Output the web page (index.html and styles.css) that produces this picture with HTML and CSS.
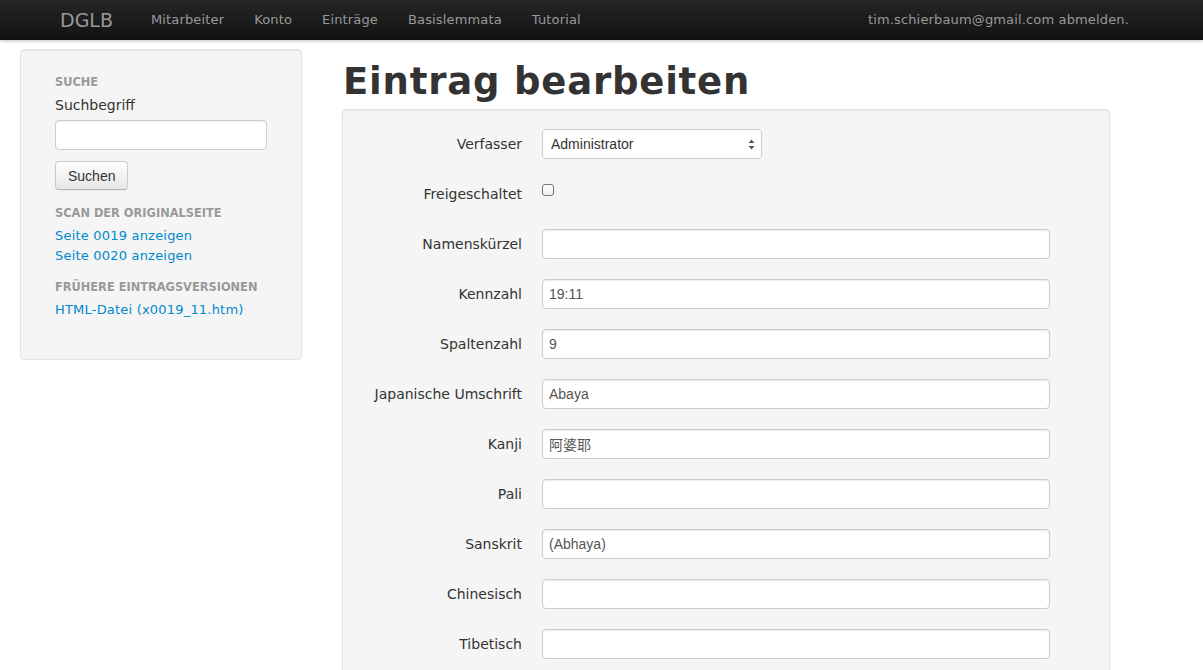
FILE: index.html
```html
<!DOCTYPE html>
<html lang="de">
<head>
<meta charset="utf-8">
<title>DGLB – Eintrag bearbeiten</title>
<link rel="stylesheet" href="styles.css">
</head>
<body>
<header class="navbar">
  <div class="navbar-inner">
    <a class="brand" href="#">DGLB</a>
    <nav class="nav">
      <a href="#">Mitarbeiter</a>
      <a href="#">Konto</a>
      <a href="#">Einträge</a>
      <a href="#">Basislemmata</a>
      <a href="#">Tutorial</a>
    </nav>
    <div class="navbar-text">tim.schierbaum@gmail.com <a href="#">abmelden.</a></div>
  </div>
</header>
<div class="container">
  <aside class="sidebar">
    <div class="well nav-list">
      <div class="nav-header">Suche</div>
      <form class="search">
        <label class="search-label">Suchbegriff</label>
        <input type="text" class="search-input">
        <button type="button" class="btn">Suchen</button>
      </form>
      <div class="nav-header">Scan der Originalseite</div>
      <a class="link" href="#">Seite 0019 anzeigen</a>
      <a class="link" href="#">Seite 0020 anzeigen</a>
      <div class="nav-header">Frühere Eintragsversionen</div>
      <a class="link" href="#">HTML-Datei (x0019_11.htm)</a>
    </div>
  </aside>
  <main class="content">
    <h1>Eintrag bearbeiten</h1>
    <form class="well form-horizontal">
      <div class="control-group">
        <label class="control-label">Verfasser</label>
        <div class="controls">
          <div class="select-wrap">
            <select class="select"><option>Administrator</option></select>
            <svg class="select-arrows" width="7" height="11" viewBox="0 0 7 11"><path d="M3.5 0.5 L6.5 4 H0.5 Z M3.5 10.5 L6.5 7 H0.5 Z" fill="#555"/></svg>
          </div>
        </div>
      </div>
      <div class="control-group">
        <label class="control-label">Freigeschaltet</label>
        <div class="controls check-controls"><span class="checkbox"></span></div>
      </div>
      <div class="control-group">
        <label class="control-label">Namenskürzel</label>
        <div class="controls"><input class="text-input" type="text" value=""></div>
      </div>
      <div class="control-group">
        <label class="control-label">Kennzahl</label>
        <div class="controls"><input class="text-input" type="text" value="19:11"></div>
      </div>
      <div class="control-group">
        <label class="control-label">Spaltenzahl</label>
        <div class="controls"><input class="text-input" type="text" value="9"></div>
      </div>
      <div class="control-group">
        <label class="control-label">Japanische Umschrift</label>
        <div class="controls"><input class="text-input" type="text" value="Abaya"></div>
      </div>
      <div class="control-group">
        <label class="control-label">Kanji</label>
        <div class="controls"><input class="text-input" type="text" value="阿婆耶"></div>
      </div>
      <div class="control-group">
        <label class="control-label">Pali</label>
        <div class="controls"><input class="text-input" type="text" value=""></div>
      </div>
      <div class="control-group">
        <label class="control-label">Sanskrit</label>
        <div class="controls"><input class="text-input" type="text" value="(Abhaya)"></div>
      </div>
      <div class="control-group">
        <label class="control-label">Chinesisch</label>
        <div class="controls"><input class="text-input" type="text" value=""></div>
      </div>
      <div class="control-group">
        <label class="control-label">Tibetisch</label>
        <div class="controls"><input class="text-input" type="text" value=""></div>
      </div>
    </form>
  </main>
</div>
</body>
</html>
```
FILE: styles.css
```css
* { box-sizing: border-box; }
html, body { margin: 0; padding: 0; }
body {
  font-family: "DejaVu Sans", Verdana, sans-serif;
  font-size: 13px;
  line-height: 18px;
  color: #333;
  background: #fff;
  overflow: hidden;
}
a { text-decoration: none; }

.navbar {
  height: 40px;
  background: linear-gradient(#262626, #121212);
  box-shadow: 0 1px 3px rgba(0,0,0,0.25);
}
.navbar-inner {
  display: flex;
  align-items: center;
  height: 40px;
  padding: 0 74px 0 60px;
}
.brand {
  font-family: "DejaVu Sans", sans-serif;
  font-size: 19px;
  color: #999;
  margin-right: 38px;
}
.nav { display: flex; }
.nav a {
  color: #999;
  font-size: 13px;
  letter-spacing: 0.15px;
  padding: 0 15px;
}
.nav a:first-child { padding-left: 0; }
.navbar-text {
  margin-left: auto;
  color: #999;
  font-size: 13px;
  letter-spacing: 0.15px;
}
.navbar-text a { color: #999; }

.container {
  display: flex;
  padding: 9px 0 0 20px;
  gap: 40px;
}
.sidebar { width: 282px; flex: none; }
.well {
  background: #f5f5f5;
  border: 1px solid #e3e3e3;
  border-radius: 4px;
  box-shadow: inset 0 1px 1px rgba(0,0,0,0.05);
}
.nav-list {
  padding: 23px 34px 30px 34px;
  display: flex;
  flex-direction: column;
  height: 311px;
}
.nav-header {
  font-size: 11.4px;
  font-weight: bold;
  color: #999;
  text-transform: uppercase;
  line-height: 18px;
  text-shadow: 0 1px 0 rgba(255,255,255,0.5);
}
.search { display: flex; flex-direction: column; align-items: flex-start; margin-bottom: 14px; }
.search-label {
  font-size: 14px;
  color: #333;
  line-height: 20px;
  margin: 4px 0 5px;
}
.search-input {
  width: 212px;
  height: 30px;
  border: 1px solid #ccc;
  border-radius: 4px;
  background: #fff;
  box-shadow: inset 0 1px 1px rgba(0,0,0,0.075);
}
.btn {
  margin-top: 11px;
  height: 29px;
  padding: 0 12px;
  font-family: "Liberation Sans", Arial, sans-serif;
  font-size: 14px;
  color: #333;
  background: linear-gradient(#ffffff, #e6e6e6);
  border: 1px solid #ccc;
  border-bottom-color: #b3b3b3;
  border-radius: 4px;
  box-shadow: inset 0 1px 0 rgba(255,255,255,0.2), 0 1px 2px rgba(0,0,0,0.05);
}
.link {
  color: #0088cc;
  font-size: 13px;
  letter-spacing: 0.2px;
  line-height: 20px;
}
.nav-header + .link { margin-top: 4px; }
.link + .nav-header { margin-top: 12px; }
.nav-header:last-of-type + .link { margin-top: 4px; }

.content { width: 768px; flex: none; }
h1 {
  font-family: "DejaVu Sans", Verdana, sans-serif;
  font-weight: bold;
  font-size: 37px;
  letter-spacing: 0.8px;
  line-height: 44px;
  margin: 11px 0 5px 1px;
  color: #333;
}
.form-horizontal {
  padding: 19px 19px 0 19px;
  height: 600px;
}
.control-group {
  display: flex;
  align-items: center;
  height: 30px;
  margin-bottom: 20px;
}
.control-label {
  width: 160px;
  text-align: right;
  margin-right: 20px;
  flex: none;
  font-size: 14px;
}
.controls { display: flex; align-items: center; }
.check-controls { height: 30px; align-items: flex-start; padding-top: 5px; }
.checkbox {
  width: 12px;
  height: 12px;
  border: 1px solid #777;
  border-radius: 3px;
  background: linear-gradient(#fff, #eee);
}
.text-input {
  width: 508px;
  height: 30px;
  border: 1px solid #ccc;
  border-radius: 4px;
  background: #fff;
  padding: 0 6px;
  font-family: "Liberation Sans", Arial, "Noto Sans CJK JP", sans-serif;
  font-size: 14px;
  color: #555;
  box-shadow: inset 0 1px 1px rgba(0,0,0,0.075);
}
.select-wrap { position: relative; }
.select {
  -webkit-appearance: none;
  appearance: none;
  width: 220px;
  height: 30px;
  border: 1px solid #ccc;
  border-radius: 4px;
  background: #fff;
  padding: 0 8px;
  font-family: "Liberation Sans", Arial, sans-serif;
  font-size: 14px;
  color: #333;
}
.select-arrows {
  position: absolute;
  right: 7px;
  top: 10px;
  pointer-events: none;
}
```
